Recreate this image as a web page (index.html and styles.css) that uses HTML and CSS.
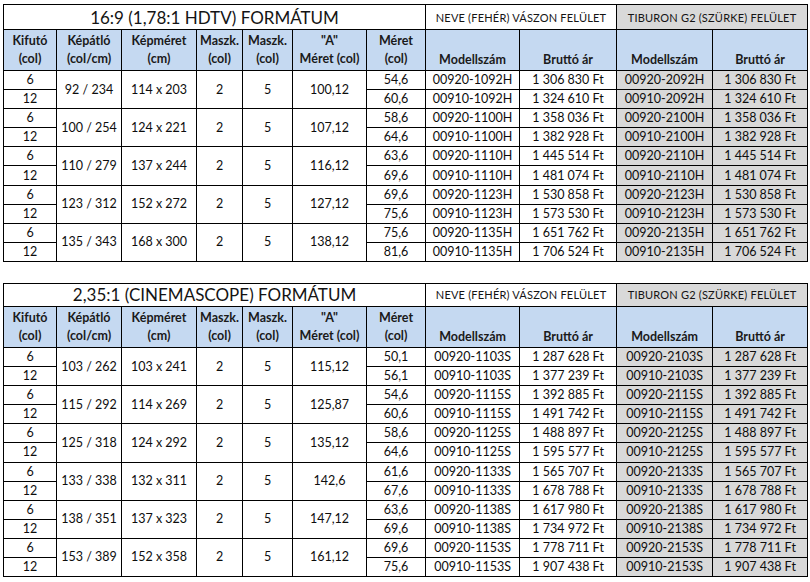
FILE: index.html
```html
<!DOCTYPE html>
<html lang="hu">
<head>
<meta charset="utf-8">
<title>Árlista</title>
<link rel="stylesheet" href="styles.css">
</head>
<body>
<div class="page">
<table class="sheet">
<colgroup>
<col class="c1"><col class="c2"><col class="c3"><col class="c4"><col class="c5"><col class="c6"><col class="c7"><col class="c8"><col class="c9"><col class="c10"><col class="c11">
</colgroup>
<tr class="title-row first">
<td colspan="7" class="main-title">16:9 (1,78:1 HDTV) FORMÁTUM</td>
<td colspan="2" class="sub-title">NEVE (FEHÉR) VÁSZON FELÜLET</td>
<td colspan="2" class="sub-title gray">TIBURON G2 (SZÜRKE) FELÜLET</td>
</tr>
<tr class="head">
<th>Kifutó<br>(col)</th><th>Képátló<br>(col/cm)</th><th>Képméret<br>(cm)</th><th>Maszk.<br>(col)</th><th>Maszk.<br>(col)</th><th>"A"<br>Méret (col)</th><th>Méret<br>(col)</th><th class="low">Modellszám</th><th class="low">Bruttó ár</th><th class="low">Modellszám</th><th class="low">Bruttó ár</th>
</tr>
<tr class="data"><td>6</td><td rowspan="2">92 / 234</td><td rowspan="2">114 x 203</td><td rowspan="2">2</td><td rowspan="2">5</td><td rowspan="2">100,12</td><td>54,6</td><td>00920-1092H</td><td>1 306 830 Ft</td><td class="gray">00920-2092H</td><td class="gray">1 306 830 Ft</td></tr>
<tr class="data"><td>12</td><td>60,6</td><td>00910-1092H</td><td>1 324 610 Ft</td><td class="gray">00910-2092H</td><td class="gray">1 324 610 Ft</td></tr>
<tr class="data"><td>6</td><td rowspan="2">100 / 254</td><td rowspan="2">124 x 221</td><td rowspan="2">2</td><td rowspan="2">5</td><td rowspan="2">107,12</td><td>58,6</td><td>00920-1100H</td><td>1 358 036 Ft</td><td class="gray">00920-2100H</td><td class="gray">1 358 036 Ft</td></tr>
<tr class="data"><td>12</td><td>64,6</td><td>00910-1100H</td><td>1 382 928 Ft</td><td class="gray">00910-2100H</td><td class="gray">1 382 928 Ft</td></tr>
<tr class="data"><td>6</td><td rowspan="2">110 / 279</td><td rowspan="2">137 x 244</td><td rowspan="2">2</td><td rowspan="2">5</td><td rowspan="2">116,12</td><td>63,6</td><td>00920-1110H</td><td>1 445 514 Ft</td><td class="gray">00920-2110H</td><td class="gray">1 445 514 Ft</td></tr>
<tr class="data"><td>12</td><td>69,6</td><td>00910-1110H</td><td>1 481 074 Ft</td><td class="gray">00910-2110H</td><td class="gray">1 481 074 Ft</td></tr>
<tr class="data"><td>6</td><td rowspan="2">123 / 312</td><td rowspan="2">152 x 272</td><td rowspan="2">2</td><td rowspan="2">5</td><td rowspan="2">127,12</td><td>69,6</td><td>00920-1123H</td><td>1 530 858 Ft</td><td class="gray">00920-2123H</td><td class="gray">1 530 858 Ft</td></tr>
<tr class="data"><td>12</td><td>75,6</td><td>00910-1123H</td><td>1 573 530 Ft</td><td class="gray">00910-2123H</td><td class="gray">1 573 530 Ft</td></tr>
<tr class="data"><td>6</td><td rowspan="2">135 / 343</td><td rowspan="2">168 x 300</td><td rowspan="2">2</td><td rowspan="2">5</td><td rowspan="2">138,12</td><td>75,6</td><td>00920-1135H</td><td>1 651 762 Ft</td><td class="gray">00920-2135H</td><td class="gray">1 651 762 Ft</td></tr>
<tr class="data"><td>12</td><td>81,6</td><td>00910-1135H</td><td>1 706 524 Ft</td><td class="gray">00910-2135H</td><td class="gray">1 706 524 Ft</td></tr>
</table>

<table class="sheet">
<colgroup>
<col class="c1"><col class="c2"><col class="c3"><col class="c4"><col class="c5"><col class="c6"><col class="c7"><col class="c8"><col class="c9"><col class="c10"><col class="c11">
</colgroup>
<tr class="title-row">
<td colspan="7" class="main-title">2,35:1 (CINEMASCOPE) FORMÁTUM</td>
<td colspan="2" class="sub-title">NEVE (FEHÉR) VÁSZON FELÜLET</td>
<td colspan="2" class="sub-title gray">TIBURON G2 (SZÜRKE) FELÜLET</td>
</tr>
<tr class="head">
<th>Kifutó<br>(col)</th><th>Képátló<br>(col/cm)</th><th>Képméret<br>(cm)</th><th>Maszk.<br>(col)</th><th>Maszk.<br>(col)</th><th>"A"<br>Méret (col)</th><th>Méret<br>(col)</th><th class="low">Modellszám</th><th class="low">Bruttó ár</th><th class="low">Modellszám</th><th class="low">Bruttó ár</th>
</tr>
<tr class="data"><td>6</td><td rowspan="2">103 / 262</td><td rowspan="2">103 x 241</td><td rowspan="2">2</td><td rowspan="2">5</td><td rowspan="2">115,12</td><td>50,1</td><td>00920-1103S</td><td>1 287 628 Ft</td><td class="gray">00920-2103S</td><td class="gray">1 287 628 Ft</td></tr>
<tr class="data"><td>12</td><td>56,1</td><td>00910-1103S</td><td>1 377 239 Ft</td><td class="gray">00910-2103S</td><td class="gray">1 377 239 Ft</td></tr>
<tr class="data"><td>6</td><td rowspan="2">115 / 292</td><td rowspan="2">114 x 269</td><td rowspan="2">2</td><td rowspan="2">5</td><td rowspan="2">125,87</td><td>54,6</td><td>00920-1115S</td><td>1 392 885 Ft</td><td class="gray">00920-2115S</td><td class="gray">1 392 885 Ft</td></tr>
<tr class="data"><td>12</td><td>60,6</td><td>00910-1115S</td><td>1 491 742 Ft</td><td class="gray">00910-2115S</td><td class="gray">1 491 742 Ft</td></tr>
<tr class="data"><td>6</td><td rowspan="2">125 / 318</td><td rowspan="2">124 x 292</td><td rowspan="2">2</td><td rowspan="2">5</td><td rowspan="2">135,12</td><td>58,6</td><td>00920-1125S</td><td>1 488 897 Ft</td><td class="gray">00920-2125S</td><td class="gray">1 488 897 Ft</td></tr>
<tr class="data"><td>12</td><td>64,6</td><td>00910-1125S</td><td>1 595 577 Ft</td><td class="gray">00910-2125S</td><td class="gray">1 595 577 Ft</td></tr>
<tr class="data"><td>6</td><td rowspan="2">133 / 338</td><td rowspan="2">132 x 311</td><td rowspan="2">2</td><td rowspan="2">5</td><td rowspan="2">142,6</td><td>61,6</td><td>00920-1133S</td><td>1 565 707 Ft</td><td class="gray">00920-2133S</td><td class="gray">1 565 707 Ft</td></tr>
<tr class="data"><td>12</td><td>67,6</td><td>00910-1133S</td><td>1 678 788 Ft</td><td class="gray">00910-2133S</td><td class="gray">1 678 788 Ft</td></tr>
<tr class="data"><td>6</td><td rowspan="2">138 / 351</td><td rowspan="2">137 x 323</td><td rowspan="2">2</td><td rowspan="2">5</td><td rowspan="2">147,12</td><td>63,6</td><td>00920-1138S</td><td>1 617 980 Ft</td><td class="gray">00920-2138S</td><td class="gray">1 617 980 Ft</td></tr>
<tr class="data"><td>12</td><td>69,6</td><td>00910-1138S</td><td>1 734 972 Ft</td><td class="gray">00910-2138S</td><td class="gray">1 734 972 Ft</td></tr>
<tr class="data"><td>6</td><td rowspan="2">153 / 389</td><td rowspan="2">152 x 358</td><td rowspan="2">2</td><td rowspan="2">5</td><td rowspan="2">161,12</td><td>69,6</td><td>00920-1153S</td><td>1 778 711 Ft</td><td class="gray">00920-2153S</td><td class="gray">1 778 711 Ft</td></tr>
<tr class="data"><td>12</td><td>75,6</td><td>00910-1153S</td><td>1 907 438 Ft</td><td class="gray">00910-2153S</td><td class="gray">1 907 438 Ft</td></tr>
</table>
</div>
</body>
</html>
```

FILE: styles.css
```css
html, body {
  margin: 0;
  padding: 0;
  background: #ffffff;
}

body {
  font-family: Lato, "Open Sans", "Liberation Sans", sans-serif;
  color: #141414;
}

.page {
  display: flex;
  flex-direction: column;
  gap: 21px;
  padding: 4px 0 0 3px;
}

.sheet {
  border-collapse: collapse;
  table-layout: fixed;
  width: 805px;
}

.c1 { width: 53px; }
.c2 { width: 65px; }
.c3 { width: 75px; }
.c4 { width: 46px; }
.c5 { width: 50px; }
.c6 { width: 74px; }
.c7 { width: 59px; }
.c8 { width: 94px; }
.c9 { width: 97px; }
.c10 { width: 96px; }
.c11 { width: 95px; }

.sheet td,
.sheet th {
  border: 1px solid #000;
  padding: 0;
  text-align: center;
  vertical-align: middle;
  white-space: nowrap;
  overflow: hidden;
}

.title-row td {
  height: 22px;
}

.title-row.first td {
  height: 24px;
}

.main-title {
  font-size: 17px;
  font-weight: normal;
  padding-top: 1px;
}

.sub-title {
  font-size: 11px;
  letter-spacing: 0.2px;
}

.gray {
  background: #d9d9d9;
}

.head th {
  background: #c5d9f1;
  height: 39px;
  font-size: 12.5px;
  font-weight: bold;
  line-height: 18px;
  color: #1a1a1a;
}

.head th.low {
  vertical-align: bottom;
  padding-bottom: 1px;
}

.data td {
  height: 18.1px;
  font-size: 12.5px;
  line-height: 16px;
  color: #0d0d0d;
}
```
